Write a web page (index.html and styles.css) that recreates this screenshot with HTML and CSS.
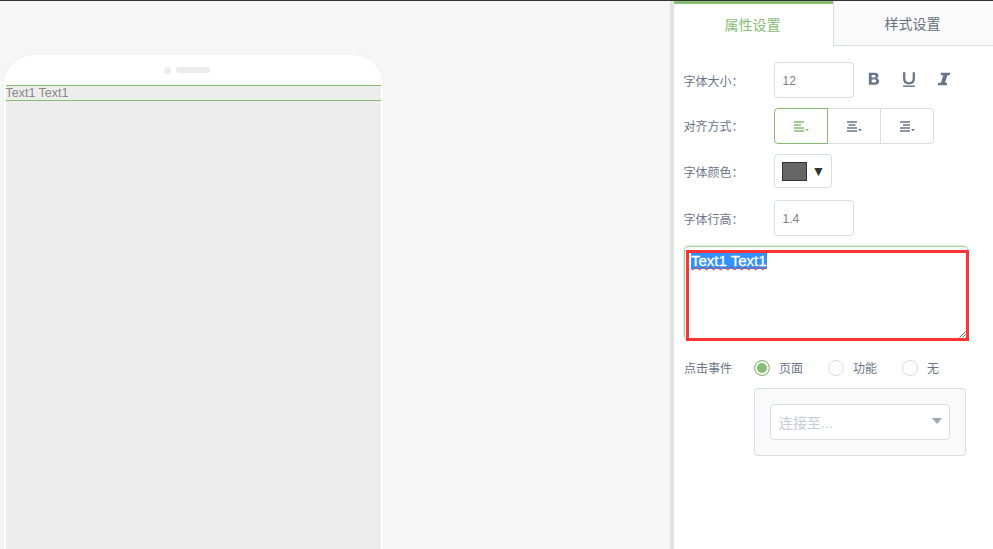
FILE: index.html
```html
<!DOCTYPE html>
<html lang="zh">
<head>
<meta charset="utf-8">
<title>属性设置</title>
<link rel="stylesheet" href="styles.css">
</head>
<body>
<div class="app">
  <main class="canvas">
    <div class="phone">
      <div class="phone-top"><span class="cam"></span><span class="speaker"></span></div>
      <div class="screen">
        <div class="text-block">Text1 Text1</div>
      </div>
    </div>
  </main>
  <aside class="panel">
    <div class="tabs">
      <div class="tab active">属性设置</div>
      <div class="tab">样式设置</div>
    </div>
    <div class="form">
      <div class="row row-size">
        <span class="label">字体大小：</span>
        <div class="field">12</div>
        <div class="styles">
          <svg class="sicon" viewBox="0 0 14 14" width="16" height="16"><path d="M2.500 1.500h5.200c2 0 3.200 1 3.200 2.700 0 1-.5 1.800-1.500 2.200 1.300.3 2.100 1.300 2.100 2.600 0 1.900-1.400 3-3.400 3H2.500zM5 3.500v2.200h2.200c.8 0 1.200-.4 1.200-1.100 0-.7-.4-1.100-1.200-1.100zM5 7.500v2.500h2.500c.9 0 1.400-.45 1.400-1.250s-.5-1.250-1.400-1.250z" fill="#6b7589" fill-rule="evenodd"/></svg>
          <svg class="sicon" viewBox="0 0 14 14" width="16" height="16"><path d="M2.800 1v5.800c0 2.700 1.500 4 4.200 4s4.200-1.300 4.200-4V1" fill="none" stroke="#6b7589" stroke-width="2"/><path d="M1.800 13.300h10.400" stroke="#6b7589" stroke-width="1.300"/></svg>
          <svg class="sicon" viewBox="0 0 14 14" width="16" height="16"><path d="M4.500 1.500h8l-.5 2.200H10L7.900 10.300h2l-.5 2.200H1.500l.5-2.200h2.300L6.400 3.700H4z" fill="#6b7589"/></svg>
        </div>
      </div>
      <div class="row row-align">
        <span class="label label-up">对齐方式：</span>
        <div class="btn-group">
          <div class="align-btn on">
            <svg viewBox="0 0 15 11" width="15" height="11"><path d="M0 1h10M0 4h7M0 7h10M0 10h10" stroke="#86bc74" stroke-width="1.500"/><path d="M11 8h4l-2 2.200z" fill="#86bc74"/></svg>
          </div>
          <div class="align-btn">
            <svg viewBox="0 0 15 11" width="15" height="11"><path d="M0 1h10M1.500 4h7M0 7h10M0 10h10" stroke="#6b7589" stroke-width="1.500"/><path d="M11 8h4l-2 2.200z" fill="#6b7589"/></svg>
          </div>
          <div class="align-btn">
            <svg viewBox="0 0 15 11" width="15" height="11"><path d="M0 1h10M3 4h7M0 7h10M0 10h10" stroke="#6b7589" stroke-width="1.500"/><path d="M11 8h4l-2 2.200z" fill="#6b7589"/></svg>
          </div>
        </div>
      </div>
      <div class="row row-color">
        <span class="label">字体颜色：</span>
        <div class="color-btn"><span class="swatch"></span><span class="color-arrow">▼</span></div>
      </div>
      <div class="row row-lh">
        <span class="label">字体行高：</span>
        <div class="field">1.4</div>
      </div>
      <div class="textarea">
        <div class="textarea-inner">
          <span class="selected">Text1 Text1</span>
          <svg class="grip" viewBox="0 0 7 7" width="7" height="7"><path d="M6.500 .5l-6 6M6.500 3.500l-3 3" stroke="#666" fill="none"/></svg>
        </div>
      </div>
      <div class="row-radio">
        <span class="label-event">点击事件</span>
        <div class="radios">
          <span class="radio on"></span><span class="radio-text">页面</span>
          <span class="radio"></span><span class="radio-text">功能</span>
          <span class="radio"></span><span class="radio-text">无</span>
        </div>
      </div>
      <div class="link-box">
        <div class="select"><span>连接至...</span><span class="caret"></span></div>
      </div>
    </div>
  </aside>
</div>
</body>
</html>
```
FILE: styles.css
```css
* { box-sizing: border-box; }
html, body { margin: 0; height: 100%; overflow: hidden; }
body {
  font-family: "Liberation Sans", "Noto Sans CJK SC", sans-serif;
  background: #fff;
  color: #6b7589;
}
.app {
  display: flex;
  height: 549px;
  border-top: 1px solid #333;
}
.canvas {
  flex: 1;
  min-width: 0;
  background: #f6f6f6;
  padding: 54px 0 0 4px;
  overflow: hidden;
}
.phone {
  width: 378.500px;
  height: 560px;
  background: #fff;
  border-radius: 30px 30px 0 0;
  padding: 0 2px 0 1.500px;
  box-shadow: 0 0 2px #e8e8e8;
}
.phone-top {
  height: 30px;
  display: flex;
  align-items: center;
  justify-content: center;
  gap: 5px;
  padding-right: 12px;
}
.cam { width: 7px; height: 7px; border-radius: 50%; background: #ececec; }
.speaker { width: 34px; height: 6px; border-radius: 3px; background: #ececec; }
.screen { height: 530px; background: #ededed; }
.text-block {
  height: 16px;
  border-top: 1px solid #86bc74;
  border-bottom: 1px solid #86bc74;
  font-size: 12.500px;
  line-height: 14px;
  color: #888;
}
.panel {
  width: 323px;
  flex: none;
  background: #fff;
  border-left: 4px solid #e2e2e2;
  display: flex;
  flex-direction: column;
}
.tabs { display: flex; height: 45px; flex: none; }
.tab {
  width: 160px;
  font-size: 14px;
  text-align: center;
  line-height: 46px;
  padding-right: 2px;
  background: #fafafa;
  border-left: 1px solid #d7dde4;
  border-bottom: 1px solid #d7dde4;
  color: #657180;
}
.tab.active {
  width: 159px;
  background: #fff;
  border: 0;
  border-top: 3px solid #86bc74;
  color: #86bc74;
  line-height: 42px;
}
.form { padding: 16px 0 0 10px; }
.row { display: flex; align-items: center; }
.label { width: 90px; margin-left: -.5px; padding-right: .5px; font-size: 12px; flex: none; }
.label-up { margin-top: -1px; }
.row-size { height: 36px; }
.row-align { height: 36px; margin-top: 10px; }
.row-color { height: 34px; margin-top: 10px; }
.row-lh { height: 36px; margin-top: 12px; }
.field {
  width: 80px;
  height: 36px;
  border: 1px solid #d7dde4;
  border-radius: 4px;
  font-size: 12px;
  line-height: 36px;
  padding-left: 8px;
  color: #808080;
}
.styles { display: flex; gap: 19px; margin: -2px 0 0 12px; }
.btn-group { display: flex; height: 36px; }
.align-btn {
  width: 54px;
  border: 1px solid #d7dde4;
  margin-left: -1px;
  padding-left: 2px;
  display: flex;
  align-items: center;
  justify-content: center;
}
.align-btn:first-child { margin-left: 0; border-radius: 4px 0 0 4px; }
.align-btn:last-child { border-radius: 0 4px 4px 0; }
.align-btn.on { border-color: #86bc74; position: relative; z-index: 1; }
.color-btn {
  width: 58px;
  height: 34px;
  border: 1px solid #d7dde4;
  border-radius: 4px;
  display: flex;
  align-items: center;
  padding-left: 7px;
  gap: 5px;
}
.swatch { width: 25px; height: 19px; background: #666; border: 1px solid #333; }
.color-arrow { font-size: 14px; color: #333; }
.textarea {
  width: 284px;
  height: 94px;
  margin-top: 10px;
  border: 1px solid #a5cf97;
  border-radius: 4px;
  box-shadow: 0 0 0 1px #e7f1e3;
  padding: 3px 0 0 1px;
}
.textarea-inner {
  position: relative;
  width: 283px;
  height: 91px;
  border: 3px solid #ff3333;
  padding: 0 0 0 2px;
  font-size: 15px;
  line-height: 15.500px;
  background: #fff;
}
.selected {
  display: inline-block;
  background: #3390ff;
  color: #fff;
  -webkit-text-stroke: .3px #fff;
  text-decoration: underline wavy #e03030 1px;
  text-decoration-skip-ink: none;
  text-underline-offset: 0;
}
.grip { position: absolute; right: 0; bottom: 0; }
.row-radio {
  display: flex;
  align-items: center;
  height: 20px;
  margin-top: 18px;
}
.label-event { width: 70px; font-size: 12px; flex: none; margin-top: -1px; }
.radios { display: flex; align-items: center; font-size: 12px; }
.radio {
  width: 16px;
  height: 16px;
  border: 1px solid #d7dde4;
  border-radius: 50%;
  background: #fff;
  flex: none;
}
.radio.on {
  border-color: #86bc74;
  background: #86bc74;
  box-shadow: inset 0 0 0 2px #fff;
}
.radio-text { margin: -1px 24px 0 9px; width: 25px; white-space: nowrap; }
.link-box {
  width: 212px;
  height: 68px;
  margin: 10px 0 0 70px;
  background: #fafafa;
  border: 1px solid #d7dde4;
  border-radius: 4px;
  padding: 15px;
}
.select {
  height: 36px;
  border: 1px solid #d7dde4;
  border-radius: 4px;
  background: #fff;
  font-size: 14px;
  color: #c5cbd5;
  display: flex;
  align-items: center;
  justify-content: space-between;
  padding: 0 7px 0 8px;
}
.caret {
  width: 0;
  height: 0;
  border-left: 5px solid transparent;
  border-right: 5px solid transparent;
  border-top: 6px solid #9ea7b4;
  margin-top: -2px;
}
```
